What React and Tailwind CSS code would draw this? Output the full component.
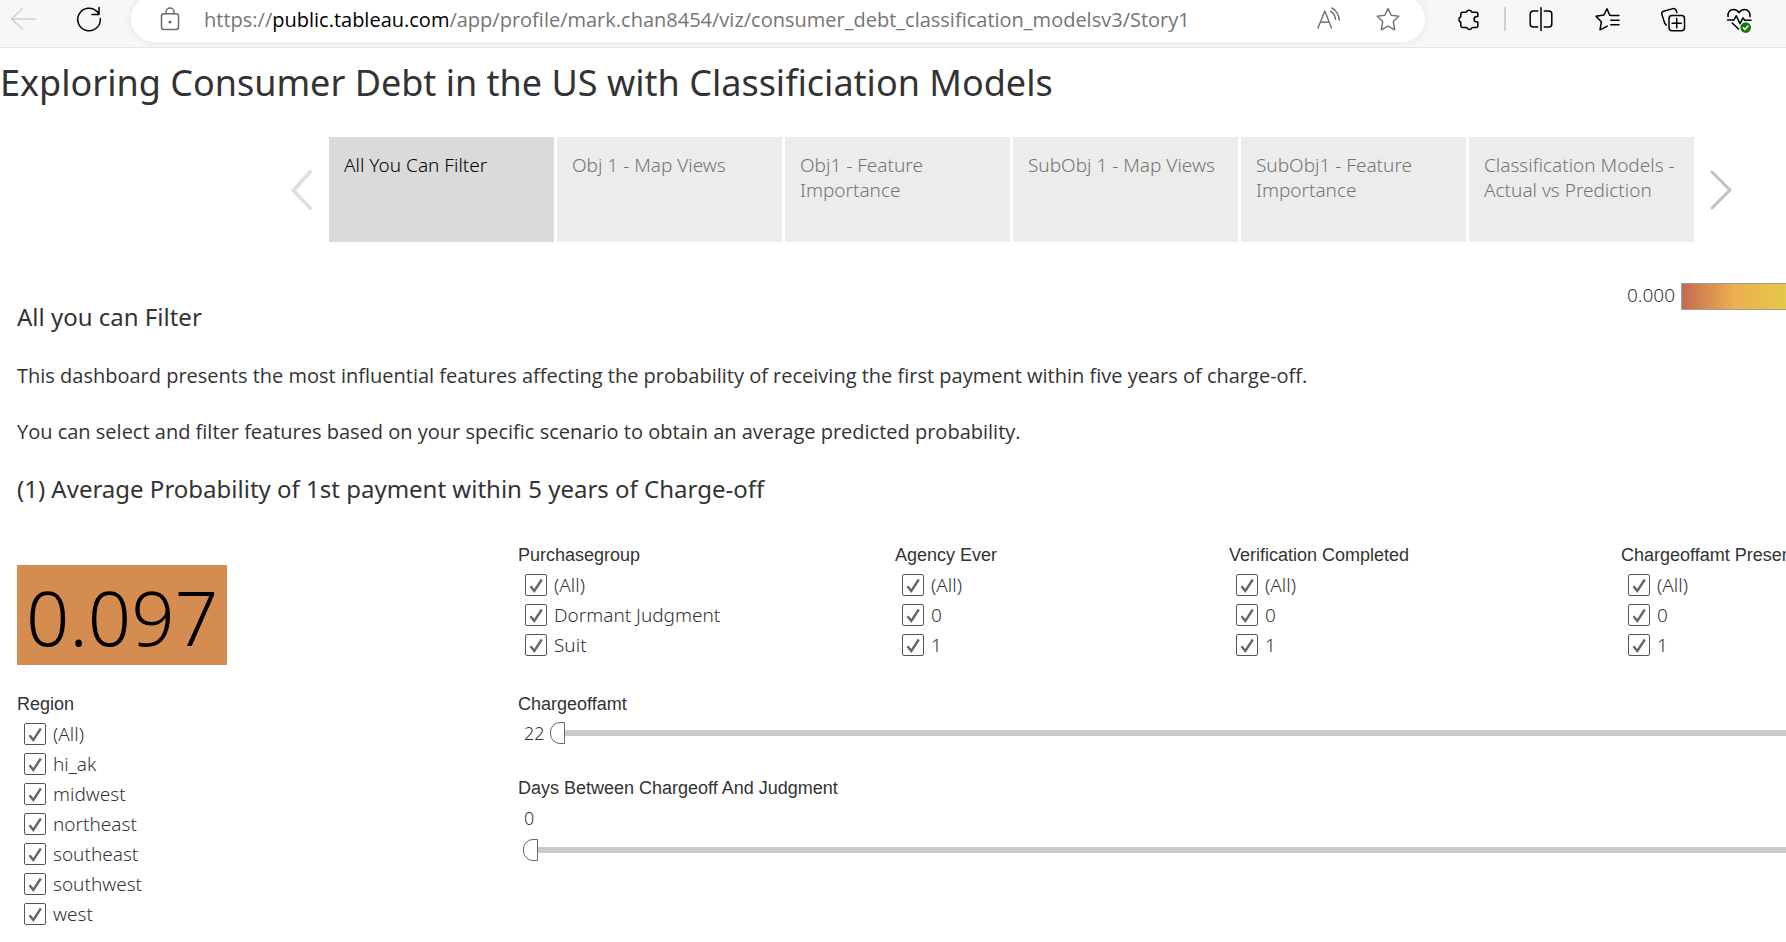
import { useId } from "react";

const tabs = [
  "All You Can Filter",
  "Obj 1 - Map Views",
  "Obj1 - Feature Importance",
  "SubObj 1 - Map Views",
  "SubObj1 - Feature Importance",
  "Classification Models - Actual vs Prediction",
];

const filters = [
  { title: "Purchasegroup", options: ["(All)", "Dormant Judgment", "Suit"] },
  { title: "Agency Ever", options: ["(All)", "0", "1"] },
  { title: "Verification Completed", options: ["(All)", "0", "1"] },
  { title: "Chargeoffamt Present", options: ["(All)", "0", "1"] },
];

const regions = ["(All)", "hi_ak", "midwest", "northeast", "southeast", "southwest", "west"];

function Icon({ children, className = "" }) {
  return (
    <svg
      viewBox="0 0 24 24"
      className={`size-6 shrink-0 overflow-visible fill-none stroke-current ${className}`}
      strokeWidth="1.5"
      strokeLinecap="round"
      strokeLinejoin="round"
      aria-hidden="true"
    >
      {children}
    </svg>
  );
}

function IconButton({ label, className = "text-black", children }) {
  return (
    <button type="button" aria-label={label} className={`flex h-[38px] shrink-0 items-center ${className}`}>
      <Icon>{children}</Icon>
    </button>
  );
}

function BrowserBar() {
  return (
    <header className="flex h-12 items-start overflow-hidden border-b border-[#e5e5e5] bg-[#f7f7f7] pr-[35px] pl-[11px]">
      <div className="flex gap-[42px]">
        <IconButton label="Back" className="text-[#cfcfcf]">
          <path d="M24 12H.5M11.5 1.5.5 12l11 10" />
        </IconButton>
        <IconButton label="Refresh">
          <path d="M23.3 11.6A11.3 11.3 0 1 1 20.3 4.8L22 7.2M22 .5v6.9h-7" />
        </IconButton>
      </div>
      <div className="-mt-1 ml-[30px] flex h-[46px] min-w-0 flex-1 items-center rounded-full bg-white pr-[25px] pl-[27px] shadow-[0_0_8px_rgba(0,0,0,0.08)]">
        <Icon className="text-[#6b6b6b]">
          <rect x="3.5" y="6.8" width="17" height="15.7" rx="2.5" />
          <path d="M8 6.8V5a4 4 0 0 1 8 0v1.8" />
          <circle cx="12" cy="15" r="0.8" className="fill-current" />
        </Icon>
        <div
          role="textbox"
          aria-label="Address"
          tabIndex={0}
          className="ml-[22px] min-w-0 flex-1 truncate pt-0.5 font-['Open_Sans',sans-serif] text-[20px] leading-[30px] text-[#757575]"
        >
          https://<span className="text-black">public.tableau.com</span>
          /app/profile/mark.chan8454/viz/consumer_debt_classification_modelsv3/Story1
        </div>
        <div className="flex gap-9">
          <IconButton label="Read aloud" className="text-[#767676]">
            <path d="M2 21 8.8 4l6.7 17M4.4 15.3h8.8M14.5 4.5c2.6 1 4.6 4 5 7.7M15.8 1c4 1.7 7.2 6.7 7.5 12" />
          </IconButton>
          <IconButton label="Add to favorites" className="text-[#767676]">
            <path d="m12 1.6 3.2 6.7 7.6 1-5.5 5.2 1.3 8.3-6.6-3.7-6.6 3.7 1.3-8.3L1.2 9.3l7.6-1z" />
          </IconButton>
        </div>
      </div>
      <div className="ml-8 flex items-center">
        <IconButton label="Extensions">
          <path d="M3.8 7.2a2 2 0 0 1 2-2h3.5a3 3 0 0 1 5.6 0h4a2 2 0 0 1 2 2v2.3h-1a2.8 2.8 0 0 0 0 5.6h1v3.4a2 2 0 0 1-2 2h-3.6a3 3 0 0 1-5.6 0H5.8a2 2 0 0 1-2-2v-3.2a3 3 0 0 1 0-5.6z" />
        </IconButton>
        <span className="mx-[23px] h-6 w-0.5 bg-[#cfcfcf]" />
        <div className="flex gap-[42px]">
          <IconButton label="Split screen">
            <path d="M8.7 4H4.2a3 3 0 0 0-3 3v10a3 3 0 0 0 3 3h4.5M15.3 4h4.5a3 3 0 0 1 3 3v10a3 3 0 0 1-3 3h-4.5M12 .8v22.6" />
          </IconButton>
          <IconButton label="Favorites">
            <path d="M15.2 8.2h-.5L12 1.8 8.8 8.1 1 9.3l5.3 5.5L5 22.8l7.3-3.6M15.8 8.5H24M15.8 13.3H24M15.8 17.8H24" />
          </IconButton>
          <IconButton label="Collections">
            <rect x="8" y="8.5" width="15.5" height="15.3" rx="3" />
            <path d="M15.7 11.6v9.2M11.1 16.2h9.2M15.8 5.6l-.7-2.3a2.5 2.5 0 0 0-3.1-1.7L2.5 4.3A2.5 2.5 0 0 0 .9 7.4l2.8 8.9 1.5 1.8" />
          </IconButton>
          <IconButton label="Browser essentials">
            <path d="M1.1 9.6C.3 5.5 3 2.4 6.5 2.4c2.6 0 4.4 1.3 5.5 3.3 1.1-2 2.9-3.3 5.5-3.3 3.5 0 6.2 3.1 5.4 7.2M.5 13H7l2.3-4.3L13 16.6l3-5.8 1.6 2.4H24M5.2 16l6.3 6" />
            <circle cx="18.7" cy="20.6" r="5.3" className="fill-[#107c10] stroke-none" />
            <path d="m16.4 20.9 1.5 1.5 3-3.3" className="stroke-white" />
          </IconButton>
        </div>
      </div>
    </header>
  );
}

function CheckItem({ label }) {
  return (
    <label className="flex h-[30px] items-center gap-[7px] text-[19px] leading-[30px] font-light whitespace-nowrap text-[#333]">
      <span className="grid size-[22px] shrink-0">
        <input
          type="checkbox"
          defaultChecked
          className="peer col-start-1 row-start-1 size-[22px] appearance-none rounded-[2px] border border-[#555] bg-white"
        />
        <svg
          viewBox="0 0 22 22"
          aria-hidden="true"
          className="pointer-events-none invisible col-start-1 row-start-1 size-[22px] fill-none stroke-[#666] stroke-[2.4] peer-checked:visible"
        >
          <path d="M5.5 12.2 9.3 17 16.8 5.5" />
        </svg>
      </span>
      {label}
    </label>
  );
}

function CheckGroup({ title, options }) {
  return (
    <fieldset className="min-w-0">
      <legend className="mb-[3px] font-['Liberation_Sans',Arial,sans-serif] text-[18px] leading-6 whitespace-nowrap text-[#333]">
        {title}
      </legend>
      <div className="pl-[7px]">
        {options.map((o) => (
          <CheckItem key={o} label={o} />
        ))}
      </div>
    </fieldset>
  );
}

function Slider({ id }) {
  return (
    <input
      id={id}
      type="range"
      defaultValue={0}
      className="h-[22px] min-w-0 flex-1 appearance-none bg-transparent [&::-webkit-slider-runnable-track]:h-1.5 [&::-webkit-slider-runnable-track]:bg-[#cacaca] [&::-webkit-slider-thumb]:-mt-2 [&::-webkit-slider-thumb]:h-[22px] [&::-webkit-slider-thumb]:w-[15px] [&::-webkit-slider-thumb]:appearance-none [&::-webkit-slider-thumb]:rounded-l-[10px] [&::-webkit-slider-thumb]:border [&::-webkit-slider-thumb]:border-[#666] [&::-webkit-slider-thumb]:bg-white"
    />
  );
}

function SliderLabel({ id, children }) {
  return (
    <label htmlFor={id} className="block font-['Liberation_Sans',Arial,sans-serif] text-[18px] leading-6 text-[#333]">
      {children}
    </label>
  );
}

function StoryNav() {
  return (
    <nav className="mt-[29px] flex items-center pr-[54px] pl-[291px]">
      <button type="button" aria-label="Previous" className="mr-[17px] text-[#e0e0e0]">
        <svg viewBox="0 0 21 40" className="h-10 w-[21px] fill-none stroke-current stroke-[4]" strokeLinecap="round" aria-hidden="true">
          <path d="M19 2 2.5 20.5 19 38" />
        </svg>
      </button>
      <div className="flex min-w-0 flex-1 gap-[3px]">
        {tabs.map((t, i) => (
          <button
            key={t}
            type="button"
            className={`flex h-[105px] min-w-0 flex-1 items-start px-[15px] pt-4 text-left text-[19px] leading-[25px] font-light ${
              i === 0 ? "bg-[#dadada] text-black" : "bg-[#ececec] text-[#757575]"
            }`}
          >
            {t}
          </button>
        ))}
      </div>
      <button type="button" aria-label="Next" className="ml-4 text-[#c0c0c0]">
        <svg viewBox="0 0 22 40" className="h-10 w-[22px] fill-none stroke-current stroke-[3]" strokeLinecap="round" aria-hidden="true">
          <path d="m2 2 18 18L2 38" />
        </svg>
      </button>
    </nav>
  );
}

export default function App() {
  const amount = useId();
  const days = useId();
  return (
    <div className="min-h-screen overflow-x-hidden bg-white font-['Noto_Sans','Open_Sans',sans-serif] text-[#333]">
      <BrowserBar />
      <main className="pt-2.5 pb-3">
        <h1 className="text-[36px] leading-[50px]">Exploring Consumer Debt in the US with Classificiation Models</h1>
        <StoryNav />
        <div className="mt-[41px] flex items-start justify-between pl-[17px]">
          <h2 className="pt-[18px] text-[24px] leading-8">All you can Filter</h2>
          <div className="flex items-start gap-1.5">
            <span className="text-[19px] leading-[25px] font-light">0.000</span>
            <span className="h-[27px] w-[105px] border border-r-0 border-[#a0a098] bg-linear-to-r from-[#c26b51] via-[#eab04e] to-[#e5c84a]" />
          </div>
        </div>
        <div className="space-y-[26px] pt-7 pl-[17px]">
          <p className="font-['Open_Sans',sans-serif] text-[20px] leading-[30px]">
            This dashboard presents the most influential features affecting the probability of receiving the first payment within five years of charge-off.
          </p>
          <p className="font-['Open_Sans',sans-serif] text-[20px] leading-[30px]">
            You can select and filter features based on your specific scenario to obtain an average predicted probability.
          </p>
          <h2 className="text-[24px] leading-8">(1) Average Probability of 1st payment within 5 years of Charge-off</h2>
        </div>
        <div className="mt-[38px] flex pl-[17px]">
          <aside className="w-[501px] shrink-0 pt-[22px]">
            <div className="mb-[27px] flex h-[100px] w-[210px] items-center justify-center bg-[#d58c50] pt-1 text-[76px] leading-[100px] font-light text-black">
              0.097
            </div>
            <CheckGroup title="Region" options={regions} />
          </aside>
          <section className="min-w-0 flex-1">
            <div className="grid grid-cols-[377fr_334fr_392fr_165fr]">
              {filters.map((f) => (
                <CheckGroup key={f.title} {...f} />
              ))}
            </div>
            <div className="mt-8">
              <SliderLabel id={amount}>Chargeoffamt</SliderLabel>
              <div className="mt-0.5 flex h-[30px] items-center gap-[5px] pl-1.5">
                <span className="text-[18px] leading-[30px] font-light">22</span>
                <Slider id={amount} />
              </div>
            </div>
            <div className="mt-7">
              <SliderLabel id={days}>Days Between Chargeoff And Judgment</SliderLabel>
              <div className="mt-[3px] pl-1.5 text-[18px] leading-[30px] font-light">0</div>
              <div className="mt-1.5 flex pl-[5px]">
                <Slider id={days} />
              </div>
            </div>
          </section>
        </div>
      </main>
    </div>
  );
}
